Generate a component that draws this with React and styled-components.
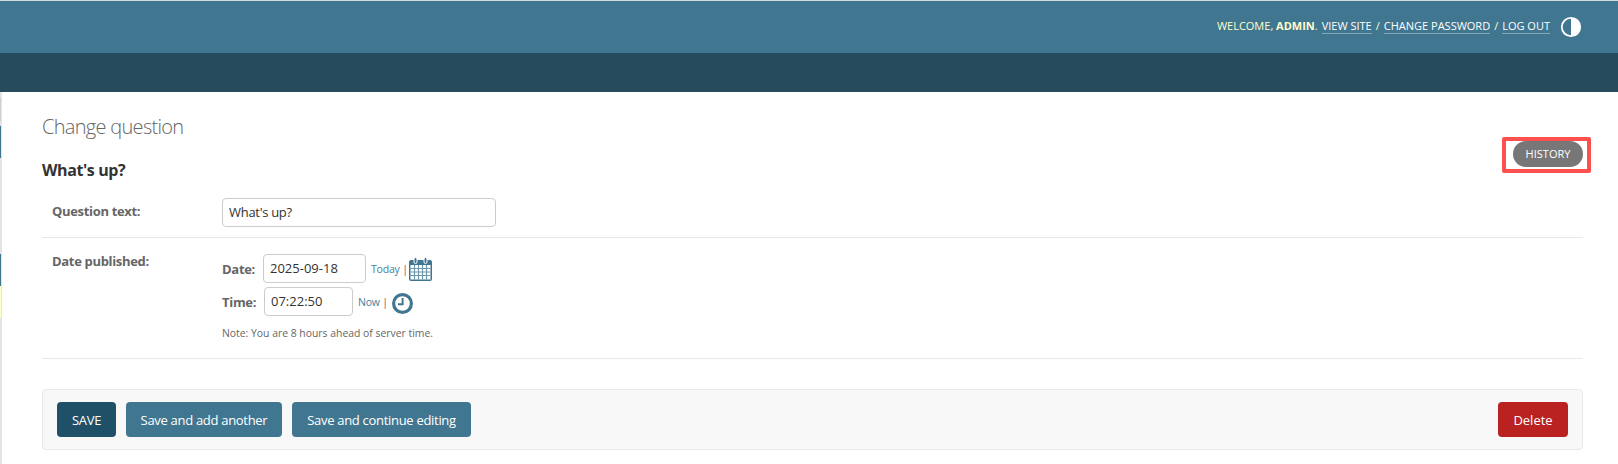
import React from 'react';
import styled, { createGlobalStyle } from 'styled-components';

const GlobalStyle = createGlobalStyle`
  html, body { margin: 0; padding: 0; background: #fff; }
  body {
    font-family: "Open Sans", "Noto Sans", "Liberation Sans", sans-serif;
    font-size: 13px;
    color: #333;
  }
  * { box-sizing: border-box; }
`;

const Page = styled.div`
  width: 1618px;
  height: 464px;
  overflow: hidden;
  display: flex;
  flex-direction: column;
`;

const Header = styled.header`
  height: 53px;
  flex: none;
  background: #417690;
  border-top: 1px solid #d5dcdd;
  display: flex;
  justify-content: flex-end;
  align-items: center;
  padding: 0 36px 3px 0;
  color: #ffc;
  font-size: 11px;
  text-transform: uppercase;
`;

const UserTools = styled.div`
  display: flex;
  gap: 4px;
  white-space: pre;
`;

const TopLink = styled.a`
  color: #fff;
  border-bottom: 1px solid rgba(255, 255, 255, 0.35);
  line-height: 15px;
`;

const ThemeToggle = styled.svg`
  width: 22px;
  height: 22px;
  margin-left: 10px;
  margin-top: 3px;
`;

const Breadcrumbs = styled.div`
  height: 39px;
  flex: none;
  background: #264b5d;
`;

const Body = styled.div`
  flex: 1;
  display: flex;
`;

const SideStrip = styled.nav`
  width: 2px;
  flex: none;
  display: flex;
  flex-direction: column;
  background: #e4e4e4;
`;

const StripSegment = styled.div`
  width: 1px;
  height: ${(p) => p.$h}px;
  background: ${(p) => p.$color};
`;

const Content = styled.main`
  flex: 1;
  padding: 0 35px 0 40px;
`;

const TitleBar = styled.div`
  display: flex;
  justify-content: space-between;
  align-items: flex-start;
  height: 106px;
`;

const Heading = styled.h1`
  margin: 20px 0 0;
  font-size: 20px;
  line-height: 30px;
  font-weight: 300;
  letter-spacing: -0.7px;
  color: #666;
`;

const SubHeading = styled.h2`
  margin: 18px 0 0;
  font-size: 16px;
  line-height: 20px;
  font-weight: 700;
  letter-spacing: -0.4px;
  color: #333;
`;

const HistoryLink = styled.a`
  position: relative;
  margin-top: 49px;
  width: 70px;
  height: 26px;
  padding-bottom: 1px;
  border-radius: 13px;
  background: #777;
  color: #fff;
  font-size: 11px;
  text-transform: uppercase;
  display: flex;
  align-items: center;
  justify-content: center;

  &::after {
    content: '';
    position: absolute;
    inset: -4px -8px -6px -11px;
    border: 4px solid #ff5050;
    border-radius: 2px;
  }
`;

const FormRow = styled.div`
  display: flex;
  align-items: flex-start;
  padding-left: 10px;
  border-bottom: 1px solid #e8e8e8;
  height: ${(p) => p.$h}px;
`;

const RowLabel = styled.label`
  width: 170px;
  flex: none;
  font-weight: 700;
  color: #666;
  font-size: 13px;
  letter-spacing: -0.33px;
  line-height: 18px;
  margin-top: ${(p) => p.$top}px;
`;

const TextField = styled.div`
  width: ${(p) => p.$w}px;
  height: 29px;
  padding: 0 6px;
  border: 1px solid #ccc;
  border-radius: 4px;
  background: #fff;
  color: #333;
  font-size: 13px;
  line-height: 27px;
  flex: none;
`;

const QuestionInput = styled(TextField)`
  letter-spacing: -0.3px;
`;

const DateFields = styled.div`
  display: flex;
  flex-direction: column;
  gap: 4px;
  margin-top: 16px;
`;

const DateLine = styled.div`
  display: flex;
  align-items: center;
  height: 29px;
`;

const InlineLabel = styled.span`
  font-weight: 700;
  color: #666;
  font-size: 13px;
  letter-spacing: -0.3px;
  width: ${(p) => p.$w}px;
  flex: none;
`;

const Shortcut = styled.span`
  margin-left: 5px;
  font-size: 10.5px;
  letter-spacing: -0.2px;
  color: #666;
  white-space: pre;
`;

const ShortcutLink = styled.a`
  color: #447e9b;
`;

const CalendarIcon = styled.svg`
  width: 23px;
  height: 24px;
  margin-left: 1.5px;
`;

const ClockIcon = styled.svg`
  width: 21px;
  height: 21px;
  margin-left: 4.5px;
  margin-top: 3px;
`;

const Note = styled.p`
  margin: 5px 0 0;
  font-size: 10.4px;
  line-height: 16px;
  color: #666;
`;

const SubmitRow = styled.div`
  margin-top: 30px;
  height: 61px;
  display: flex;
  align-items: center;
  gap: 10px;
  padding: 0 14px;
  background: #f8f8f8;
  border: 1px solid #e8e8e8;
  border-radius: 4px;
`;

const ActionButton = styled.button`
  height: 35px;
  padding: 0;
  width: ${(p) => p.$w}px;
  border: 0;
  border-radius: 4px;
  background: ${(p) => p.$bg};
  color: #fff;
  font-family: inherit;
  font-size: 13px;
  letter-spacing: ${(p) => (p.$push ? 0 : -0.3)}px;
  ${(p) => p.$push && 'margin-left: auto;'}
`;

const Clock = () => (
  <ClockIcon viewBox="0 0 21 21">
    <circle cx="10.5" cy="10.5" r="8.9" fill="none" stroke="#417690" strokeWidth="3.2" />
    <path d="M10.6 5v6.2H6" fill="none" stroke="#417690" strokeWidth="2" />
  </ClockIcon>
);

const Calendar = () => (
  <CalendarIcon viewBox="0 0 23 24">
    <path d="M2 3h19a2 2 0 0 1 2 2v17a2 2 0 0 1-2 2H2a2 2 0 0 1-2-2V5a2 2 0 0 1 2-2z" fill="#417690" />
    <rect x="5" y="0.5" width="3" height="6" rx="1.5" fill="#417690" stroke="#fff" strokeWidth="1" />
    <rect x="15" y="0.5" width="3" height="6" rx="1.5" fill="#417690" stroke="#fff" strokeWidth="1" />
    <path d="M1.5 8h20v14.5h-20z" fill="#fff" />
    <path d="M5.5 8v14.5M9.5 8v14.5M13.5 8v14.5M17.5 8v14.5M1.5 11.5h20M1.5 15h20M1.5 18.5h20" stroke="#6f98ad" strokeWidth="1.2" fill="none" />
  </CalendarIcon>
);

const stripSegments = [
  { h: 6, color: '#e4e4e4' },
  { h: 23, color: '#cfcfcf' },
  { h: 5, color: '#e4e4e4' },
  { h: 32, color: '#417690' },
  { h: 96, color: '#e4e4e4' },
  { h: 32, color: '#417690' },
  { h: 32, color: '#ffffcc' },
];

export default function App() {
  return (
    <Page>
      <GlobalStyle />
      <Header>
        <UserTools>
          <span>Welcome, <strong>admin</strong>.</span>
          <TopLink>View site</TopLink>
          <span>/</span>
          <TopLink>Change password</TopLink>
          <span>/</span>
          <TopLink>Log out</TopLink>
        </UserTools>
        <ThemeToggle viewBox="0 0 22 22">
          <circle cx="11" cy="11" r="9.2" fill="none" stroke="#fff" strokeWidth="1.8" />
          <path d="M11 2a9 9 0 0 1 0 18z" fill="#fff" />
        </ThemeToggle>
      </Header>
      <Breadcrumbs />
      <Body>
        <SideStrip>
          {stripSegments.map((seg, idx) => (
            <StripSegment key={idx} $h={seg.h} $color={seg.color} />
          ))}
        </SideStrip>
        <Content>
          <TitleBar>
            <div>
              <Heading>Change question</Heading>
              <SubHeading>What's up?</SubHeading>
            </div>
            <HistoryLink>History</HistoryLink>
          </TitleBar>
          <FormRow $h={40}>
            <RowLabel $top={4}>Question text:</RowLabel>
            <QuestionInput $w={274}>What's up?</QuestionInput>
          </FormRow>
          <FormRow $h={121}>
            <RowLabel $top={14}>Date published:</RowLabel>
            <DateFields>
              <DateLine>
                <InlineLabel $w={41}>Date:</InlineLabel>
                <TextField $w={103}>2025-09-18</TextField>
                <Shortcut><ShortcutLink>Today</ShortcutLink> |</Shortcut>
                <Calendar />
              </DateLine>
              <DateLine>
                <InlineLabel $w={42}>Time:</InlineLabel>
                <TextField $w={89}>07:22:50</TextField>
                <Shortcut><ShortcutLink>Now</ShortcutLink> |</Shortcut>
                <Clock />
              </DateLine>
              <Note>Note: You are 8 hours ahead of server time.</Note>
            </DateFields>
          </FormRow>
          <SubmitRow>
            <ActionButton $w={59} $bg="#205067">SAVE</ActionButton>
            <ActionButton $w={156} $bg="#417690">Save and add another</ActionButton>
            <ActionButton $w={179} $bg="#417690">Save and continue editing</ActionButton>
            <ActionButton $w={70} $bg="#ba2121" $push>Delete</ActionButton>
          </SubmitRow>
        </Content>
      </Body>
    </Page>
  );
}
